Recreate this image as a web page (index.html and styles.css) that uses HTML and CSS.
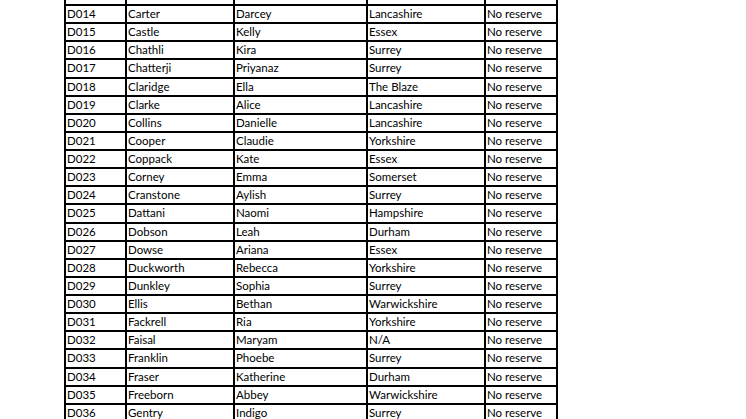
FILE: index.html
```html
<!DOCTYPE html>
<html>
<head>
<meta charset="utf-8">
<link rel="stylesheet" href="styles.css">
</head>
<body>
<div class="sheet">
<div></div><div></div><div></div><div></div><div></div>
<div>D014</div><div>Carter</div><div>Darcey</div><div>Lancashire</div><div>No reserve</div>
<div>D015</div><div>Castle</div><div>Kelly</div><div>Essex</div><div>No reserve</div>
<div>D016</div><div>Chathli</div><div>Kira</div><div>Surrey</div><div>No reserve</div>
<div>D017</div><div>Chatterji</div><div>Priyanaz</div><div>Surrey</div><div>No reserve</div>
<div>D018</div><div>Claridge</div><div>Ella</div><div>The Blaze</div><div>No reserve</div>
<div>D019</div><div>Clarke</div><div>Alice</div><div>Lancashire</div><div>No reserve</div>
<div>D020</div><div>Collins</div><div>Danielle</div><div>Lancashire</div><div>No reserve</div>
<div>D021</div><div>Cooper</div><div>Claudie</div><div>Yorkshire</div><div>No reserve</div>
<div>D022</div><div>Coppack</div><div>Kate</div><div>Essex</div><div>No reserve</div>
<div>D023</div><div>Corney</div><div>Emma</div><div>Somerset</div><div>No reserve</div>
<div>D024</div><div>Cranstone</div><div>Aylish</div><div>Surrey</div><div>No reserve</div>
<div>D025</div><div>Dattani</div><div>Naomi</div><div>Hampshire</div><div>No reserve</div>
<div>D026</div><div>Dobson</div><div>Leah</div><div>Durham</div><div>No reserve</div>
<div>D027</div><div>Dowse</div><div>Ariana</div><div>Essex</div><div>No reserve</div>
<div>D028</div><div>Duckworth</div><div>Rebecca</div><div>Yorkshire</div><div>No reserve</div>
<div>D029</div><div>Dunkley</div><div>Sophia</div><div>Surrey</div><div>No reserve</div>
<div>D030</div><div>Ellis</div><div>Bethan</div><div>Warwickshire</div><div>No reserve</div>
<div>D031</div><div>Fackrell</div><div>Ria</div><div>Yorkshire</div><div>No reserve</div>
<div>D032</div><div>Faisal</div><div>Maryam</div><div>N/A</div><div>No reserve</div>
<div>D033</div><div>Franklin</div><div>Phoebe</div><div>Surrey</div><div>No reserve</div>
<div>D034</div><div>Fraser</div><div>Katherine</div><div>Durham</div><div>No reserve</div>
<div>D035</div><div>Freeborn</div><div>Abbey</div><div>Warwickshire</div><div>No reserve</div>
<div>D036</div><div>Gentry</div><div>Indigo</div><div>Surrey</div><div>No reserve</div>
</div>
</body>
</html>
```
FILE: styles.css
```css
html, body {
  margin: 0;
  padding: 0;
  background: #ffffff;
  overflow: hidden;
}
body {
  width: 746px;
  height: 419px;
}
.sheet {
  display: grid;
  grid-template-columns: 59px 106px 131px 116px 70px;
  grid-auto-rows: 16.14px;
  gap: 2px;
  padding: 2px;
  background: #000000;
  width: max-content;
  margin: -14.14px 0 0 64px;
  font-family: Lato, "Liberation Sans", sans-serif;
  font-size: 11.5px;
  color: #000000;
}
.sheet > div {
  background: #ffffff;
  padding: 0 0 0 1px;
  line-height: 16.5px;
  white-space: nowrap;
  overflow: hidden;
}
```
